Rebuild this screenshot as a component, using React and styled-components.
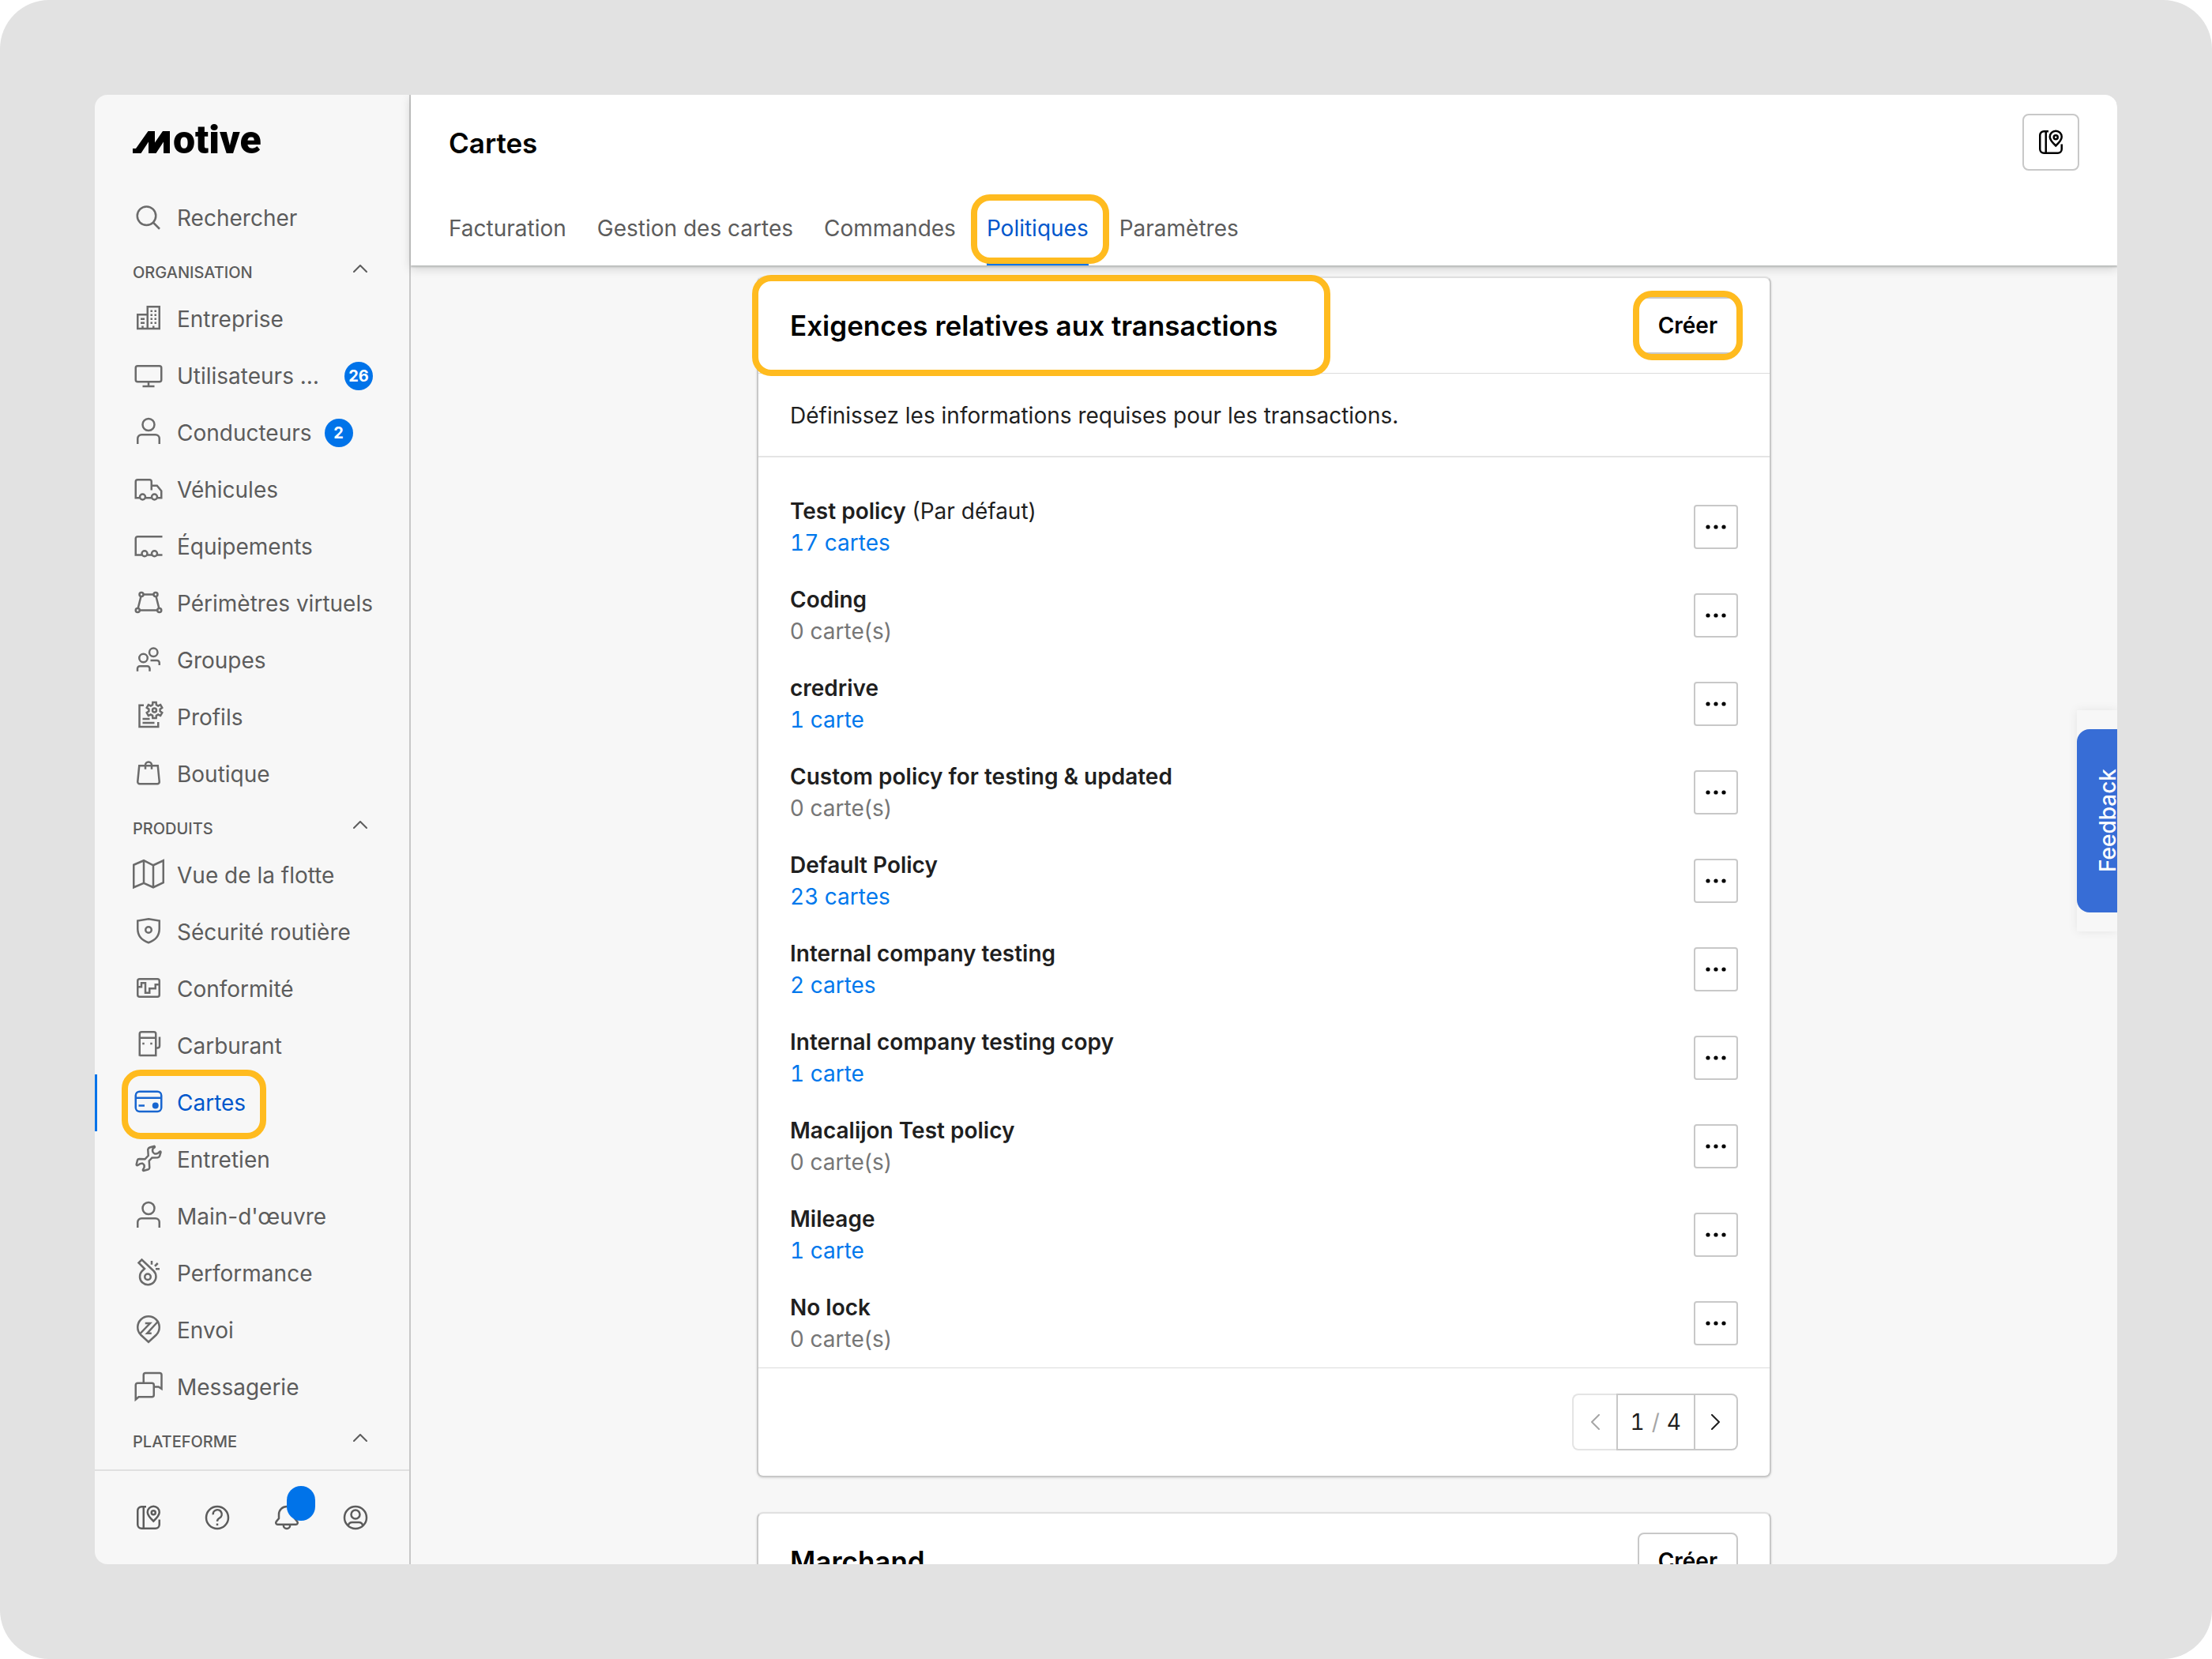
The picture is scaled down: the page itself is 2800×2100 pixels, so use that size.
import React, { useState } from 'react';
import styled, { createGlobalStyle, css } from 'styled-components';

const blue = '#0073e9';
const darkBlue = '#0057cc';
const line = '#c8c8c8';

// rounded cog outline used by the "Profils" icon
const gearPath = (cx, cy, outer, inner, teeth) => {
    const step = (Math.PI * 2) / teeth
    const points = []
    for (let i = 0; i < teeth; i++) {
        const a = i * step - Math.PI / 2
        const spots = [[-0.32, inner], [-0.2, outer], [0.2, outer], [0.32, inner]]
        spots.forEach(([k, r]) => {
            points.push(`${(cx + r * Math.cos(a + k * step)).toFixed(2)} ${(cy + r * Math.sin(a + k * step)).toFixed(2)}`)
        })
    }
    return `M${points.join('L')}Z`
}

const icons = {
    search: <><circle cx="7" cy="7.7" r="4.7" /><path d="M10.4 11.1l3.2 3.2" /></>,
    company: <>
        <path d="M7.5 6.5V2.5h6v11.1h-11V6.5h5v7" />
        <path d="M9 4.7h1M11 4.7h1M9 6.7h1M11 6.7h1M9 8.7h1M11 8.7h1M9 10.7h1M11 10.7h1M4 8.7h2M4 10.7h2M5 12.2v1.2M10.5 12.2v1.2" />
    </>,
    monitor: <><rect x="1.5" y="3.7" width="13" height="8" rx="1" /><path d="M8 11.7V14M5 14h6" /></>,
    person: <><circle cx="8" cy="4.6" r="3" /><path d="M2.5 14.4v-2.7a2 2 0 0 1 2-2h7a2 2 0 0 1 2 2v2.7" /></>,
    truck: <>
        <path d="M9.5 9V4.7a1 1 0 0 0-1-1h-6a1 1 0 0 0-1 1v8.2h2M9.5 6.7h2.8l2.2 2.7v3.5h-2M6.5 12.9h3" />
        <circle cx="5" cy="12.4" r="1.4" /><circle cx="11" cy="12.4" r="1.4" />
    </>,
    trailer: <>
        <path d="M15 3.7H2.5a1 1 0 0 0-1 1v8.3h3M7.4 13h2.2M12.4 13H15" />
        <circle cx="6" cy="12.3" r="1.4" /><circle cx="11" cy="12.3" r="1.4" />
    </>,
    fence: <>
        <path d="M5.4 4.2h5.1M4.2 5.1l-1.5 6M11.8 5.1l1.5 6M3.4 12.2h9.2" />
        <circle cx="4.4" cy="4.2" r="1" /><circle cx="11.6" cy="4.2" r="1" />
        <circle cx="2.5" cy="12.2" r="1" /><circle cx="13.5" cy="12.2" r="1" />
    </>,
    groups: <>
        <circle cx="5.4" cy="7.6" r="2.1" /><circle cx="10.5" cy="4.7" r="2.1" />
        <path d="M2.4 14.3v-1.4a1.2 1.2 0 0 1 1.2-1.2h3.8a1.2 1.2 0 0 1 1.2 1.2v1.4M9 8.8h3.3a1.2 1.2 0 0 1 1.2 1.2v1.2" />
    </>,
    profiles: <>
        <path d="M5.6 2.7H3.4v10.9h9.5v-2.4M5 9.6h3.6M5 11.6h6" />
        <path d={gearPath(11, 5.2, 4.1, 2.9, 6)} /><circle cx="11" cy="5.2" r="1" />
    </>,
    bag: <>
        <path d="M3.3 4.5h9.4l.8 8.1a1 1 0 0 1-1 1.1h-9a1 1 0 0 1-1-1.1z" />
        <path d="M6.4 6.3V4.2a1.6 1.6 0 0 1 3.2 0v2.1" />
    </>,
    map: <path d="M.5 3.5l5.1-2.2 4.8 2.4 5.1-2.4v11.2l-5.1 2.4-4.8-2.2-5.1 2.2zM5.6 1.3v11.4M10.4 3.7v11.2" />,
    shield: <>
        <path d="M8 2.1l5.5.9v4c0 3.7-2.3 6-5.5 7.1-3.2-1.1-5.5-3.4-5.5-7.1V3z" />
        <circle cx="8" cy="7.6" r="1.5" />
    </>,
    compliance: <>
        <rect x="2.5" y="3.7" width="11" height="9" rx="1" />
        <path d="M2.5 7.7h1.9v-2h2v5h2.1V8.5h3v-2h2" />
    </>,
    fuel: <>
        <path d="M3.5 13.9V2.7a1 1 0 0 1 1-1h6.2a1 1 0 0 1 1 1v10.9H3.5M3.5 4.7h8.2M13.6 4.2v4.5a1.1 1.1 0 0 1-1.1 1.1h-.8" />
        <path d="M4.9 7.6h1M8.9 7.6h1" />
    </>,
    card: <>
        <rect x="1.5" y="3.1" width="13" height="10.1" rx="2" />
        <path d="M1.5 6.3h13M3 10.2h3" /><circle cx="11.5" cy="10.2" r="1.1" fill="currentColor" />
    </>,
    wrench: <path d="M7.7 3.6Q7.9 2.9 8.6 2.6L10.9 1.9Q11.4 2.2 11 2.6L10.2 3.2Q9.6 4.9 11 5.7Q12 6 12.9 5.4L13.7 4.7Q14.2 4.5 14.2 5L13.6 7Q13.3 7.6 12.6 7.7L9.8 7.8L8.3 9.4L8.5 12.8Q8.5 13.5 7.9 13.7L5.5 14.4Q5 14.3 5.2 13.8L5.8 12.7Q6.2 11.3 5 10.7Q3.8 10.5 3.2 11.2L2.3 11.7Q1.8 11.7 1.9 11.1L2.4 9Q2.6 8.4 3.3 8.4L6.2 8.5L7.9 6.7Z" />,
    whistle: <>
        <path d="M4.6 7.7L6 6.4 3 3.4l1.6-1.6 6 5.7a4.1 4.1 0 1 1-6 .2z" />
        <circle cx="7.6" cy="10.5" r="1.5" /><path d="M9.6 2.4v1.9M11.2 5.1l1.5-1.5M11.6 6.5h2" />
    </>,
    dispatch: <>
        <path d="M8 14.7l-4-3.7a5.5 5.5 0 1 1 8 0z" />
        <path d="M3.7 10.5l5.1-5.3H6.3M12.6 4.5l-5.3 5.8h2.2" />
    </>,
    chat: <>
        <path d="M1.5 15V7.7a1 1 0 0 1 1-1h7.2a1 1 0 0 1 1 1v5a1 1 0 0 1-1 1H3z" />
        <path d="M5.5 6.7V2.6a1 1 0 0 1 1-1h7.1a1 1 0 0 1 1 1v7l-1.5-1h-2.3" />
    </>,
    guide: <>
        <path d="M6.8 2.5H4.5a2 2 0 0 0-2 2v7a2 2 0 0 0 2 2h7a2 2 0 0 0 2-2V9M5.5 2.5v11" />
        <path d="M10.5 9.8Q7.5 7 7.5 5.3a3 3 0 0 1 6 0Q13.5 7 10.5 9.8z" /><circle cx="10.5" cy="5.5" r="1" />
    </>,
    help: <>
        <circle cx="8" cy="8" r="5.6" />
        <path d="M5.9 6.5a2.2 2.2 0 1 1 3.4 1.6Q8 8.8 8 9.9" /><path d="M8 11v1" />
    </>,
    bell: <>
        <path d="M4 8.4V6.4a4 4 0 0 1 8 0v2l1.3 1.6c.5.7.1 1.5-.7 1.5H3.4c-.8 0-1.2-.8-.7-1.5z" />
        <path d="M6.3 11.7a1.7 1.9 0 0 0 3.4 0" />
    </>,
    account: <>
        <circle cx="8" cy="8" r="5.6" /><circle cx="8" cy="6.4" r="2.2" />
        <path d="M4.3 12c.3-1.1 1-1.6 2-1.6h3.4c1 0 1.7.5 2 1.6" />
    </>,
};

const organisation = [
    { icon: 'company', label: 'Entreprise' },
    { icon: 'monitor', label: 'Utilisateurs …', badge: 26, pushBadge: true },
    { icon: 'person', label: 'Conducteurs', badge: 2 },
    { icon: 'truck', label: 'Véhicules' },
    { icon: 'trailer', label: 'Équipements' },
    { icon: 'fence', label: 'Périmètres virtuels' },
    { icon: 'groups', label: 'Groupes' },
    { icon: 'profiles', label: 'Profils' },
    { icon: 'bag', label: 'Boutique' },
];

const products = [
    { icon: 'map', label: 'Vue de la flotte' },
    { icon: 'shield', label: 'Sécurité routière' },
    { icon: 'compliance', label: 'Conformité' },
    { icon: 'fuel', label: 'Carburant' },
    { icon: 'card', label: 'Cartes', active: true },
    { icon: 'wrench', label: 'Entretien' },
    { icon: 'person', label: "Main-d'œuvre" },
    { icon: 'whistle', label: 'Performance' },
    { icon: 'dispatch', label: 'Envoi' },
    { icon: 'chat', label: 'Messagerie' },
];

const tabs = ['Facturation', 'Gestion des cartes', 'Commandes', 'Politiques', 'Paramètres'];

const policies = [
    { name: 'Test policy', isDefault: true, cards: 17 },
    { name: 'Coding', cards: 0 },
    { name: 'credrive', cards: 1 },
    { name: 'Custom policy for testing & updated', cards: 0 },
    { name: 'Default Policy', cards: 23 },
    { name: 'Internal company testing', cards: 2 },
    { name: 'Internal company testing copy', cards: 1 },
    { name: 'Macalijon Test policy', cards: 0 },
    { name: 'Mileage', cards: 1 },
    { name: 'No lock', cards: 0 },
];

const Icon = ({ name }) => (
    <IconSvg viewBox="0 0 16 16" aria-hidden="true">{icons[name]}</IconSvg>
)

const Chevron = ({ d, width, height }) => (
    <ChevronSvg width={width} height={height} viewBox={`0 0 ${width} ${height}`} aria-hidden="true">
        <path d={d} />
    </ChevronSvg>
)

const NavItem = ({ item }) => (
    <NavLink href="#" $active={item.active} aria-current={item.active ? 'page' : undefined}>
        <NavInner>
            <Icon name={item.icon} />
            <span>{item.label}</span>
            {item.active && <Highlight $inset="-6px -26px -10px -14px" />}
        </NavInner>
        {item.badge && <Badge $push={item.pushBadge}>{item.badge}</Badge>}
    </NavLink>
)

const NavSection = ({ title, items }) => {
    const [open, setOpen] = useState(true)
    return (
        <section>
            <SectionHeader type="button" aria-expanded={open} onClick={() => setOpen(!open)}>
                <SectionTitle>{title}</SectionTitle>
                <Chevron width={18} height={10} d="M1 9l8-8 8 8" />
            </SectionHeader>
            {open && items.map((item) => <NavItem key={item.label} item={item} />)}
        </section>
    )
}

const PolicyRow = ({ policy }) => {
    const { name, isDefault, cards } = policy
    return (
        <Policy>
            <div>
                <PolicyName><strong>{name}</strong>{isDefault && ' (Par défaut)'}</PolicyName>
                {cards > 0
                    ? <CardsLink href="#">{cards} {cards > 1 ? 'cartes' : 'carte'}</CardsLink>
                    : <CardsEmpty>0 carte(s)</CardsEmpty>}
            </div>
            <MoreButton type="button" aria-label={`Options de ${name}`}>
                <svg width="26" height="6" viewBox="0 0 26 6" aria-hidden="true">
                    <circle cx="3" cy="3" r="2.6" /><circle cx="13" cy="3" r="2.6" /><circle cx="23" cy="3" r="2.6" />
                </svg>
            </MoreButton>
        </Policy>
    )
}

const App = () => {
    const [tab, setTab] = useState('Politiques')

    return (
        <Stage>
            <GlobalStyle />
            <Window>
                <Sidebar>
                    <Nav>
                        <Logo href="#" aria-label="Motive">
                            <svg width="48" height="28" viewBox="0 0 48 28" aria-hidden="true">
                                <path d="M0 22h4L19.5 0H28v14.5L38 0h9v28h-8V13.5L29.5 28H20V13.5L10.5 28H0z" />
                            </svg>
                            otive
                        </Logo>
                        <NavLink href="#"><NavInner><Icon name="search" /><span>Rechercher</span></NavInner></NavLink>
                        <NavSection title="ORGANISATION" items={organisation} />
                        <NavSection title="PRODUITS" items={products} />
                        <NavSection title="PLATEFORME" items={[]} />
                    </Nav>
                    <SidebarFooter>
                        <FooterButton type="button" aria-label="Guide"><Icon name="guide" /></FooterButton>
                        <FooterButton type="button" aria-label="Aide"><Icon name="help" /></FooterButton>
                        <FooterButton type="button" aria-label="Notifications"><Icon name="bell" /><Blob /></FooterButton>
                        <FooterButton type="button" aria-label="Compte"><Icon name="account" /></FooterButton>
                    </SidebarFooter>
                </Sidebar>
                <Main>
                    <Header>
                        <HeaderTop>
                            <PageTitle>Cartes</PageTitle>
                            <GuideButton type="button" aria-label="Guide"><Icon name="guide" /></GuideButton>
                        </HeaderTop>
                        <Tabs>
                            {tabs.map((name) => (
                                <Tab key={name} type="button" $active={name === tab} onClick={() => setTab(name)}>
                                    {name}
                                    {name === 'Politiques' && <Highlight $inset="4px -26px 2px -20px" />}
                                </Tab>
                            ))}
                        </Tabs>
                    </Header>
                    <Content>
                        <Card>
                            <CardHeader>
                                <CardTitle>
                                    Exigences relatives aux transactions
                                    <Highlight $inset="-40px -66px -40px -48px" />
                                </CardTitle>
                                <CreateButton type="button">
                                    Créer
                                    <Highlight $inset="-10px -8px" />
                                </CreateButton>
                            </CardHeader>
                            <Description>Définissez les informations requises pour les transactions.</Description>
                            <PolicyList>
                                {policies.map((policy) => <PolicyRow key={policy.name} policy={policy} />)}
                            </PolicyList>
                            <CardFooter>
                                <Pager>
                                    <PagerButton type="button" disabled aria-label="Page précédente">
                                        <Chevron width={12} height={20} d="M11 1l-9 9 9 9" />
                                    </PagerButton>
                                    <PagerCount>1<Slash>/</Slash>4</PagerCount>
                                    <PagerButton type="button" aria-label="Page suivante">
                                        <Chevron width={12} height={20} d="M1 1l9 9-9 9" />
                                    </PagerButton>
                                </Pager>
                            </CardFooter>
                        </Card>
                        <Card>
                            <CardHeader>
                                <CardTitle>Marchand</CardTitle>
                                <CreateButton type="button">Créer</CreateButton>
                            </CardHeader>
                        </Card>
                    </Content>
                    <FeedbackPanel>
                        <FeedbackButton type="button">Feedback</FeedbackButton>
                    </FeedbackPanel>
                </Main>
            </Window>
        </Stage>
    )
}

export default App

const GlobalStyle = createGlobalStyle`
    * {
        box-sizing: border-box;
    }
    body {
        margin: 0;
        background: #fff;
        font-family: Inter, "Noto Sans", sans-serif;
        font-size: 28px;
        line-height: 40px;
        color: #1f1f1f;
    }
    h1, h2, p, ul {
        margin: 0;
        padding: 0;
    }
    a {
        text-decoration: none;
    }
    button {
        font: inherit;
        color: inherit;
        margin: 0;
        padding: 0;
        border: 0;
        background: none;
        cursor: pointer;
    }
`;

const Stage = styled.div`
    height: 100vh;
    padding: 120px;
    border-radius: 62px;
    background: #e2e2e2;
`;

const Window = styled.div`
    display: grid;
    grid-template-columns: 400px minmax(0, 1fr);
    height: 100%;
    border-radius: 16px;
    overflow: hidden;
    background: #f7f7f7;
`;

const Sidebar = styled.aside`
    display: flex;
    flex-direction: column;
    min-height: 0;
    border-right: 2px solid ${line};
    color: #5c5c5c;
`;

const Nav = styled.nav`
    flex: 1;
    min-height: 0;
    overflow: hidden;
`;

const Logo = styled.a`
    display: flex;
    align-items: baseline;
    gap: 3px;
    height: 120px;
    padding: 27px 48px 0;
    color: #000;
    font-family: Roboto, sans-serif;
    font-weight: 900;
    font-size: 50px;
    line-height: 60px;

    svg {
        fill: currentColor;
    }
`;

const IconSvg = styled.svg`
    flex: none;
    width: 40px;
    height: 40px;
    fill: none;
    stroke: currentColor;
    stroke-width: 1;
`;

const ChevronSvg = styled.svg`
    fill: none;
    stroke: currentColor;
    stroke-width: 2;
    stroke-linecap: round;
    stroke-linejoin: round;
`;

const Highlight = styled.span`
    position: absolute;
    inset: ${(props) => props.$inset};
    border: 8px solid #ffbb1f;
    border-radius: 24px;
    pointer-events: none;
`;

const NavLink = styled.a`
    display: flex;
    align-items: center;
    gap: 16px;
    height: 72px;
    padding: 0 46px 0 48px;
    color: ${(props) => (props.$active ? darkBlue : '#5c5c5c')};
    ${(props) => props.$active && css`
        box-shadow: inset 3px 0 ${blue};
    `}
`;

const NavInner = styled.span`
    position: relative;
    display: flex;
    align-items: center;
    gap: 16px;
    height: 100%;
    white-space: nowrap;

    svg {
        margin-bottom: 4px;
        opacity: 0.9;
    }
`;

const Badge = styled.span`
    display: flex;
    align-items: center;
    justify-content: center;
    min-width: 36px;
    height: 36px;
    padding: 0 5px;
    margin-left: ${(props) => (props.$push ? 'auto' : '0')};
    border-radius: 18px;
    background: ${blue};
    color: #fff;
    font-size: 20px;
    font-weight: 700;
`;

const SectionHeader = styled.button`
    display: flex;
    align-items: center;
    justify-content: space-between;
    width: 100%;
    height: 56px;
    padding: 0 53px 0 48px;
`;

const SectionTitle = styled.span`
    padding-top: 10px;
    font-size: 20px;
    font-weight: 500;
`;

const SidebarFooter = styled.div`
    display: flex;
    align-items: center;
    justify-content: space-between;
    height: 120px;
    padding: 0 48px;
    border-top: 2px solid #e0e0e0;
`;

const FooterButton = styled.button`
    position: relative;
    display: flex;
`;

const Blob = styled.span`
    position: absolute;
    left: 20px;
    bottom: 16px;
    width: 36px;
    height: 44px;
    border-radius: 18px;
    background: ${blue};
`;

const Main = styled.main`
    position: relative;
    display: flex;
    flex-direction: column;
    min-width: 0;
    min-height: 0;
`;

const Header = styled.header`
    position: relative;
    z-index: 1;
    flex: none;
    padding: 24px 48px 0;
    background: #fff;
    box-shadow: 0 2px 2px #b8bab9, 0 4px 12px rgba(0, 0, 0, 0.16);
`;

const HeaderTop = styled.div`
    display: flex;
    align-items: center;
    justify-content: space-between;
    height: 72px;
`;

const PageTitle = styled.h1`
    padding-top: 2px;
    color: #000;
    font-size: 35px;
    font-weight: 600;
`;

const GuideButton = styled.button`
    display: flex;
    align-items: center;
    justify-content: center;
    width: 72px;
    height: 72px;
    border: 2px solid ${line};
    border-radius: 8px;
    color: #000;
`;

const Tabs = styled.div`
    display: flex;
    gap: 39px;
    margin-top: 26px;
`;

const Tab = styled.button`
    position: relative;
    height: 94px;
    color: ${(props) => (props.$active ? darkBlue : '#5c5c5c')};
    box-shadow: ${(props) => (props.$active ? `inset 0 -4px ${blue}` : 'none')};
`;

const Content = styled.div`
    flex: 1;
    display: flex;
    flex-direction: column;
    align-items: center;
    gap: 44px;
    min-height: 0;
    padding: 14px 48px 0;
    overflow: hidden;
`;

const Card = styled.section`
    flex: none;
    width: 100%;
    max-width: 1284px;
    border: 2px solid ${line};
    border-top-color: #e0e0e0;
    border-radius: 8px;
    background: #fff;
    box-shadow: 0 1px 3px rgba(0, 0, 0, 0.12);
`;

const CardHeader = styled.div`
    display: flex;
    align-items: center;
    justify-content: space-between;
    height: 120px;
    padding: 0 40px;
`;

const CardTitle = styled.h2`
    position: relative;
    color: #000;
    font-size: 35px;
    font-weight: 600;
    line-height: 48px;
`;

const CreateButton = styled.button`
    position: relative;
    height: 72px;
    padding: 0 24px;
    border: 2px solid ${line};
    border-radius: 8px;
    color: #000;
    font-weight: 600;
`;

const Description = styled.p`
    padding: 33px 40px 31px;
    border-top: 1px solid #dcdcdc;
    border-bottom: 2px solid #e4e4e4;
`;

const PolicyList = styled.ul`
    padding: 32px 40px 0;
    list-style: none;
`;

const Policy = styled.li`
    display: flex;
    align-items: center;
    justify-content: space-between;
    height: 112px;
`;

const PolicyName = styled.p`
    strong {
        font-weight: 600;
    }
`;

const CardsLink = styled.a`
    display: block;
    color: #0078ec;
    font-variant-numeric: tabular-nums;
`;

const CardsEmpty = styled.p`
    color: #767676;
`;

const MoreButton = styled.button`
    display: flex;
    align-items: center;
    justify-content: center;
    width: 56px;
    height: 56px;
    border: 2px solid ${line};
    border-radius: 4px;
`;

const CardFooter = styled.div`
    display: flex;
    justify-content: flex-end;
    padding: 32px 40px;
    border-top: 1px solid #dcdcdc;
`;

const Pager = styled.div`
    display: flex;
    height: 72px;
`;

const PagerButton = styled.button`
    display: flex;
    align-items: center;
    justify-content: center;
    width: 54px;
    border: 2px solid ${line};
    border-left: 0;
    border-radius: 0 8px 8px 0;

    &:disabled {
        width: 56px;
        border: 2px solid #e4e4e4;
        border-right: 0;
        border-radius: 8px 0 0 8px;
        color: #a6a6a6;
    }
`;

const PagerCount = styled.span`
    display: flex;
    align-items: center;
    gap: 9px;
    padding: 0 16px;
    border: 2px solid ${line};
    font-variant-numeric: tabular-nums;
`;

const Slash = styled.span`
    color: #a6a6a6;
`;

// tab that hangs on the right edge over the page
const FeedbackPanel = styled.div`
    position: absolute;
    right: 0;
    top: 779px;
    width: 51px;
    padding: 24px 0;
    overflow: hidden;
    background: #f7f7f7;
    box-shadow: 0 0 12px rgba(0, 0, 0, 0.08);
`;

const FeedbackButton = styled.button`
    display: flex;
    align-items: center;
    justify-content: center;
    width: 78px;
    height: 232px;
    border-radius: 0 16px 16px 0;
    background: #376dd6;
    color: #fff;
    font-weight: 500;
    writing-mode: vertical-rl;
    transform: rotate(180deg);
`;
